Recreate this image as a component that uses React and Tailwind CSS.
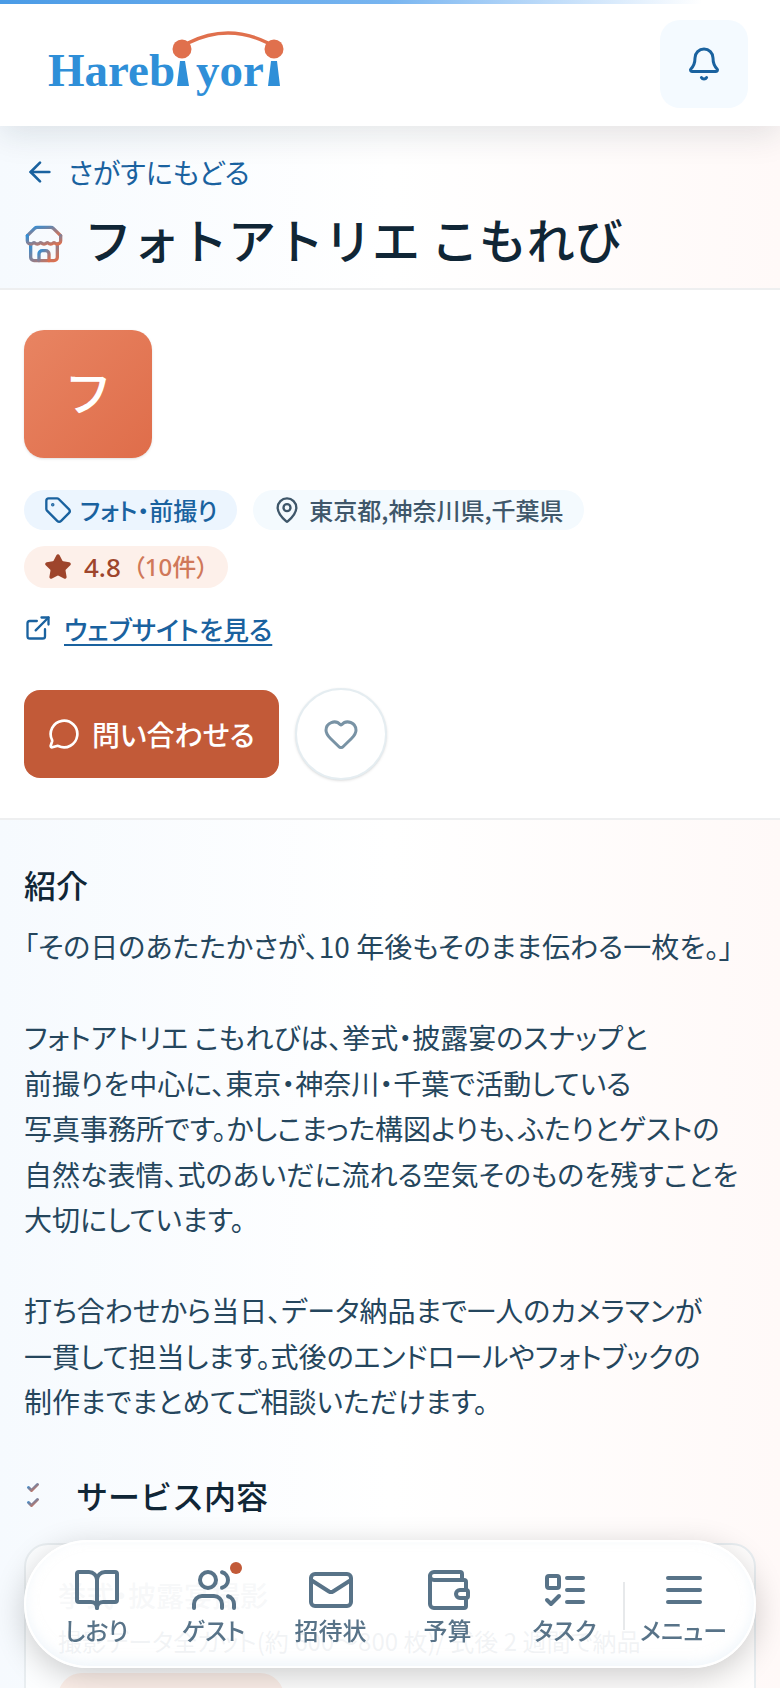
import React from 'react';
import {
  ArrowLeft,
  Bell,
  BookOpen,
  ExternalLink,
  Heart,
  ListChecks,
  Mail,
  MapPin,
  MessageCircle,
  Star,
  Tag,
  Users,
  Wallet,
} from 'lucide-react';

const introduction = `「その日のあたたかさが、10 年後もそのまま伝わる一枚を。」

フォトアトリエ こもれびは、挙式・披露宴のスナップと前撮りを中心に、東京・神奈川・千葉で活動している写真事務所です。かしこまった構図よりも、ふたりとゲストの自然な表情、式のあいだに流れる空気そのものを残すことを大切にしています。

打ち合わせから当日、データ納品まで一人のカメラマンが一貫して担当します。式後のエンドロールやフォトブックの制作までまとめてご相談いただけます。`;

const Logo = () => (
  <svg viewBox="0 0 240 72" className="h-[72px] w-[240px]" role="img" aria-label="Harebiyori">
    <g fill="#2f8fd8" fontFamily="'Liberation Serif', serif" fontWeight="700" fontSize="47">
      <text x="0" y="58">Hareb</text>
      <text x="148" y="58">yor</text>
      <path d="M132 33h5l4 25h-12zM223 33h6l3 25h-12z" />
    </g>
    <path d="M140 15q40 -20 80 0" fill="none" stroke="#e0704d" strokeWidth="3.5" />
    <circle cx="134" cy="21" r="9.5" fill="#e0704d" />
    <circle cx="226" cy="21" r="9.5" fill="#e0704d" />
  </svg>
);

const StoreIcon = ({ className }) => (
  <svg viewBox="0 0 24 24" className={className} fill="none" stroke="url(#brand-gradient)" strokeWidth="2" strokeLinecap="round" strokeLinejoin="round" aria-hidden="true">
    <path d="m2 7 4.41-4.41A2 2 0 0 1 7.83 2h8.34a2 2 0 0 1 1.42.59L22 7" />
    <path d="M4 12v8a2 2 0 0 0 2 2h12a2 2 0 0 0 2-2v-8" />
    <path d="M15 22v-4a2 2 0 0 0-2-2h-2a2 2 0 0 0-2 2v4" />
    <path d="M22 7v3a2 2 0 0 1-2 2a2.7 2.7 0 0 1-1.59-.63.7.7 0 0 0-.82 0A2.7 2.7 0 0 1 16 12a2.7 2.7 0 0 1-1.59-.63.7.7 0 0 0-.82 0A2.7 2.7 0 0 1 12 12a2.7 2.7 0 0 1-1.59-.63.7.7 0 0 0-.82 0A2.7 2.7 0 0 1 8 12a2.7 2.7 0 0 1-1.59-.63.7.7 0 0 0-.82 0A2.7 2.7 0 0 1 4 12a2 2 0 0 1-2-2V7" />
  </svg>
);

const TaskIcon = ({ className }) => (
  <svg viewBox="0 0 24 24" className={className} fill="none" stroke="currentColor" strokeWidth="2" strokeLinecap="round" strokeLinejoin="round" aria-hidden="true">
    <rect x="3" y="5" width="6" height="6" rx="1" />
    <path d="m3 17 2 2 4-4M13 6h8M13 12h8M13 18h8" />
  </svg>
);

const MenuIcon = ({ className }) => (
  <svg viewBox="0 0 24 24" className={className} fill="none" stroke="currentColor" strokeWidth="2" strokeLinecap="round" aria-hidden="true">
    <path d="M4 6h16M4 12h16M4 18h16" />
  </svg>
);

const navItems = [
  { label: 'しおり', icon: BookOpen },
  { label: 'ゲスト', icon: Users, badge: true },
  { label: '招待状', icon: Mail },
  { label: '予算', icon: Wallet },
  { label: 'タスク', icon: TaskIcon },
];

const Header = () => (
  <header className="relative z-10 bg-white shadow-[0_8px_32px_rgba(16,42,58,0.12)]">
    <div className="h-1 bg-linear-to-r from-[#4a9be6] via-[#78b5f0] via-50% to-white to-90%"></div>
    <div className="flex h-[122px] items-start justify-between pl-12 pr-8 pt-4">
      <a href="#home" className="mt-2">
        <Logo />
      </a>
      <button type="button" aria-label="お知らせ" className="flex size-[88px] items-center justify-center rounded-[20px] bg-[#f4faff] text-[#1a629f]">
        <Bell className="size-9" />
      </button>
    </div>
  </header>
);

const PageTitle = () => (
  <div className="border-b-2 border-[#eeeff0] px-6 pb-4 pt-6">
    <a href="#search" className="inline-flex h-11 items-center gap-3 text-[28px] text-[#1a629f]">
      <ArrowLeft className="size-8" />
      さがすにもどる
    </a>
    <div className="mt-2.5 flex items-end gap-5">
      <StoreIcon className="mb-2 size-10" />
      <h1 className="text-5xl leading-[68px] font-medium text-[#102636] [font-feature-settings:normal]">フォトアトリエ こもれび</h1>
    </div>
  </div>
);

const Profile = () => (
  <section className="border-b-2 border-[#eeeff0] bg-white px-6 pb-[38px] pt-10">
    <div className="flex size-32 items-center justify-center rounded-[20px] bg-linear-to-br from-[#e88462] to-[#df6d4a] pb-2 text-5xl font-medium text-white shadow-sm">フ</div>

    <div className="mt-8 flex flex-wrap gap-4 text-2xl font-medium">
      <span className="flex h-10 items-center gap-2 rounded-full bg-[#ecf5fe] px-5 text-[#1a629f]">
        <Tag className="size-7" />
        フォト・前撮り
      </span>
      <span className="flex h-10 items-center gap-2 rounded-full bg-[#f4fafe] px-5 text-[#3f576a]">
        <MapPin className="size-7" />
        東京都,神奈川県,千葉県
      </span>
      <span className="flex h-[42px] items-center gap-3 rounded-full bg-[#fdf0ea] px-5 font-['Noto_Sans','Noto_Sans_CJK_JP',sans-serif] text-[#9e452c]">
        <Star className="size-7 fill-current" />
        <span className="text-[26px]">4.8</span>
        <span className="text-[#d07859]">（10件）</span>
      </span>
    </div>

    <a href="#website" className="mt-[18px] inline-flex h-11 items-center gap-3 text-[26px] font-medium text-[#1a629f]">
      <ExternalLink className="size-7" />
      <span className="underline decoration-2 underline-offset-4">ウェブサイトを見る</span>
    </a>

    <div className="mt-[38px] flex items-center gap-4">
      <button type="button" className="flex h-[88px] items-center gap-3 rounded-2xl bg-[#c25a38] px-6 text-[28px] font-medium text-white">
        <MessageCircle className="size-8" />
        問い合わせる
      </button>
      <button type="button" aria-label="お気に入り" className="flex size-[92px] items-center justify-center rounded-full border-2 border-[#e5edf1] bg-white text-[#7993a5] shadow-sm">
        <Heart className="size-9" />
      </button>
    </div>
  </section>
);

const Services = () => (
  <section>
    <div className="mt-[50px] flex items-center gap-4">
      <ListChecks className="size-9" stroke="url(#brand-gradient)" />
      <h2 className="text-[32px] leading-10 font-medium text-[#102636] [font-feature-settings:normal]">サービス内容</h2>
    </div>
    <div className="mt-7 rounded-3xl border-2 border-[#e9eef1] bg-white/70 px-8 py-7">
      <h3 className="text-[28px] leading-[44px] font-medium text-[#93a2ad]">挙式・披露宴撮影</h3>
      <p className="mt-1 text-2xl leading-10 text-[#52697a]">撮影データ全カット(約 600〜800 枚)/ 式後 2 週間で納品</p>
      <div className="mt-3 h-12 w-[226px] rounded-full bg-[#fdf0ea]"></div>
    </div>
  </section>
);

const BottomNav = () => (
  <nav className="fixed inset-x-6 bottom-5 z-20 flex h-32 items-center rounded-full border-2 border-white bg-white/92 px-3 pt-1 text-2xl text-[#587388] shadow-[0_8px_32px_rgba(0,0,0,0.2),inset_0_-4px_12px_rgba(225,238,248,0.5)]">
    {navItems.map(({ label, icon: Icon, badge }) => (
      <a key={label} href={`#${label}`} className="relative flex flex-1 flex-col items-center font-medium">
        <Icon className="size-12" />
        <span className="leading-8">{label}</span>
        {badge && <span className="absolute left-1/2 top-0 ml-4 size-3 -translate-y-1 rounded-full bg-[#c25a38]"></span>}
      </a>
    ))}
    <span className="h-12 w-0.5 bg-[#e7e9eb]"></span>
    <button type="button" className="flex flex-1 flex-col items-center font-medium">
      <MenuIcon className="size-12" />
      <span className="leading-8">メニュー</span>
    </button>
  </nav>
);

export default function App() {
  return (
    <div lang="ja" className="h-screen overflow-hidden bg-linear-to-r from-[#f6fafe] via-white to-[#fff9f8] font-['Noto_Sans_CJK_JP',sans-serif] [font-feature-settings:'palt']">
      <svg className="absolute size-0" aria-hidden="true">
        <linearGradient id="brand-gradient" x1="0" y1="0" x2="1" y2="1">
          <stop offset="0%" stopColor="#2f8fd8" />
          <stop offset="100%" stopColor="#e0704d" />
        </linearGradient>
      </svg>
      <Header />
      <main>
        <PageTitle />
        <Profile />
        <div className="px-6 pt-11">
          <h2 className="text-[32px] leading-10 font-medium text-[#102636] [font-feature-settings:normal]">紹介</h2>
          <p className="mt-5 whitespace-pre-line pr-3 text-[28px] leading-relaxed text-[#25465d] [word-break:auto-phrase]">{introduction}</p>
          <Services />
        </div>
      </main>
      <BottomNav />
    </div>
  );
}
